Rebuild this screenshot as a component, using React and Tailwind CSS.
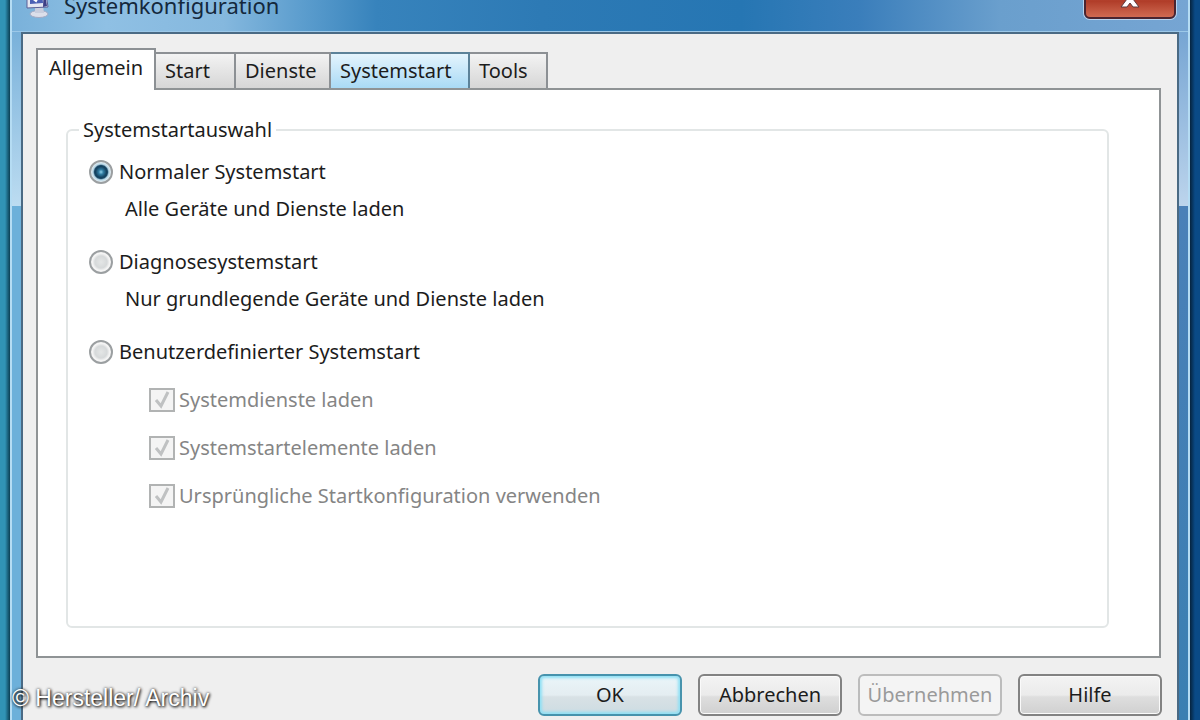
import React, { useState } from 'react';

const tabs = [
  { name: 'Start', width: 'w-20' },
  { name: 'Dienste', width: 'w-[95px]' },
  { name: 'Systemstart', width: 'w-[139px]', hot: true },
  { name: 'Tools', width: 'w-[78px]' },
];

const bootModes = [
  { id: 'normal', label: 'Normaler Systemstart', hint: 'Alle Geräte und Dienste laden' },
  { id: 'diagnose', label: 'Diagnosesystemstart', hint: 'Nur grundlegende Geräte und Dienste laden' },
  { id: 'custom', label: 'Benutzerdefinierter Systemstart' },
];

const customOptions = ['Systemdienste laden', 'Systemstartelemente laden', 'Ursprüngliche Startkonfiguration verwenden'];

const MonitorIcon = () => (
  <svg viewBox="0 0 28 32" className="w-7 h-8 shrink-0" aria-hidden="true">
    <ellipse cx="15" cy="27" rx="9" ry="3.5" fill="#dcdfea" stroke="#a3aac4" />
    <path d="M11 19h8l1 7h-9z" fill="#c9cede" />
    <path d="M3 2l18-2 3 20-21 1z" fill="#e4e6f2" stroke="#5a5f96" />
    <path d="M20 1l3 18-4 1z" fill="#3d3f86" />
    <path d="M6 4l12-1 1 13-13 1z" fill="#4a5fb4" />
    <path d="M8 11l4 3 5-9" fill="none" stroke="#fff" strokeWidth="2" />
  </svg>
);

const TitleBar = () => (
  <header className="h-8 flex items-end justify-between px-3 pb-3 overflow-hidden border-b border-[#9cc8e8] bg-[linear-gradient(90deg,#79b1da_0,#8fc0e4_8%,#85b8de_18%,#5a9ccd_25%,#3783bc_31%,#2d7ab5_45%,#2676b3_62%,#3a7ebb_72%,#6a9fcd_84%,#76a5d3_100%)]">
    <div className="flex items-end gap-3">
      <MonitorIcon />
      <h1 className="text-[22px] leading-7 text-[#14283c]">Systemkonfiguration</h1>
    </div>
    <button
      aria-label="Schließen"
      className="w-[92px] h-9 shrink-0 flex items-end justify-center rounded-b-md border-2 border-[#4a2430] bg-gradient-to-b from-[#d98a7c] via-[#b03c28] to-[#cf6a52] ring-1 ring-[#b9d4ee]"
    >
      <svg viewBox="0 0 24 20" className="w-6 h-5 mb-2" aria-hidden="true">
        <path d="M3 2h6l3 4 3-4h6l-6 8 6 8h-6l-3-4-3 4H3l6-8z" fill="#fff" stroke="#5d3a3c" />
      </svg>
    </button>
  </header>
);

const TabBar = () => (
  <div role="tablist" className="flex items-end">
    <button role="tab" aria-selected="true" className="relative w-[120px] h-[42px] -mb-0.5 pb-1 bg-white border-2 border-b-0 border-[#8c9094]">
      Allgemein
    </button>
    {tabs.map((tab) => (
      <button
        key={tab.name}
        role="tab"
        aria-selected="false"
        className={`${tab.width} h-9 pl-[9px] text-left border-2 border-l-0 border-b-0 ${
          tab.hot
            ? 'border-[#5c8299] bg-gradient-to-b from-[#e4f4fd] to-[#a9daf5]'
            : 'border-[#8c9094] bg-gradient-to-b from-[#f3f3f3] to-[#d6d6d6]'
        }`}
      >
        {tab.name}
      </button>
    ))}
  </div>
);

const BootSelection = () => {
  const [mode, setMode] = useState('normal');

  return (
    <fieldset className="border-2 border-[#e2e6e6] rounded-md ml-7 mr-[50px] pl-[21px] pb-[118px]">
      <legend className="-ml-2.5 px-1">Systemstartauswahl</legend>
      <div className="flex flex-col gap-[29px] pt-[18px]">
        {bootModes.map((item) => (
          <div key={item.id}>
            <label className="flex items-center gap-1.5">
              <input
                type="radio"
                name="boot"
                checked={mode === item.id}
                onChange={() => setMode(item.id)}
                className="appearance-none w-6 h-6 rounded-full border-2 border-[#9b9fa1] bg-[radial-gradient(closest-side,#e4e6e6_0,#d6d9da_60%,#f4f4f4_85%)] checked:bg-[radial-gradient(closest-side,#8fd0ea_0,#2f7aa0_25%,#14405e_55%,#1b4a68_65%,#b3d3e4_78%,#e8f1f5_100%)]"
              />
              {item.label}
            </label>
            {item.hint && <p className="pt-[13px] pl-9">{item.hint}</p>}
          </div>
        ))}
      </div>
      <div className="flex flex-col gap-6 pt-6 pl-[60px] text-[#858585]">
        {customOptions.map((option) => (
          <label key={option} className="flex items-center gap-1">
            <span className="grid">
              <input
                type="checkbox"
                checked
                disabled
                readOnly
                className="appearance-none col-start-1 row-start-1 w-[26px] h-6 border-2 border-[#b1b3b3] bg-[#f4f4f4]"
              />
              <svg viewBox="0 0 26 24" className="col-start-1 row-start-1 w-[26px] h-6" aria-hidden="true">
                <path d="M7 12l5 6 7-14" fill="none" stroke="#bfc1c2" strokeWidth="3" />
              </svg>
            </span>
            {option}
          </label>
        ))}
      </div>
    </fieldset>
  );
};

const buttonBase = 'w-36 h-[42px] rounded-md border-2';
const buttonNormal = 'border-[#828282] bg-[linear-gradient(180deg,#f3f3f3_0,#ebebeb_50%,#dedede_55%,#d0d0d0_100%)] shadow-[inset_0_0_0_1px_#fafafa]';

const Footer = () => (
  <footer className="flex justify-end gap-4 pt-4">
    <button className={`${buttonBase} border-[#4793ad] bg-[linear-gradient(180deg,#eaf5f9_0,#e4edf1_50%,#d8e1e5_55%,#cddce2_100%)] shadow-[inset_0_0_3px_2px_#8fe0f5]`}>
      OK
    </button>
    <button className={`${buttonBase} ${buttonNormal}`}>Abbrechen</button>
    <button disabled className={`${buttonBase} border-[#bcbcbc] bg-[#f4f4f4] text-[#9a9a9a]`}>
      Übernehmen
    </button>
    <button className={`${buttonBase} ${buttonNormal}`}>Hilfe</button>
  </footer>
);

const App = () => {
  return (
    <div className="relative h-screen overflow-hidden flex font-['Noto_Sans',sans-serif] text-[20px] leading-6 text-[#1c1c1c]">
      <div className="w-2.5 bg-gradient-to-r from-[#3193b5] from-50% to-[#0b3f54]" />
      <div className="flex-1 flex flex-col border-x-2 border-[#b5dcf3]">
        <TitleBar />
        <div className="flex-1 flex">
          <div className="w-[9px] bg-[linear-gradient(180deg,#79b1da_0,#bcdcf1_174px,#6cb0da_174px,#6cb0da_100%)]" />
          <main className="flex-1 pt-3.5 pl-[13px] pr-[15px] bg-[#efefef] border-2 border-b-0 border-[#4a6a84]">
            <TabBar />
            <section className="mr-px pt-7 pb-7 bg-white border-2 border-[#8f9395]">
              <BootSelection />
            </section>
            <Footer />
          </main>
          <div className="w-[9px] bg-[linear-gradient(180deg,#76a5d3_0,#bcd4ec_174px,#4a80b8_174px,#3a7fb2_100%)]" />
        </div>
      </div>
      <div className="w-2.5 bg-gradient-to-r from-[#06243f] to-[#0a4a86] to-50%" />
      <p className="absolute left-3 bottom-2.5 font-['Liberation_Sans',sans-serif] text-[23px] text-white [text-shadow:1px_1px_3px_#000,0_0_3px_#444]">
        © Hersteller/ Archiv
      </p>
    </div>
  );
};

export default App;
